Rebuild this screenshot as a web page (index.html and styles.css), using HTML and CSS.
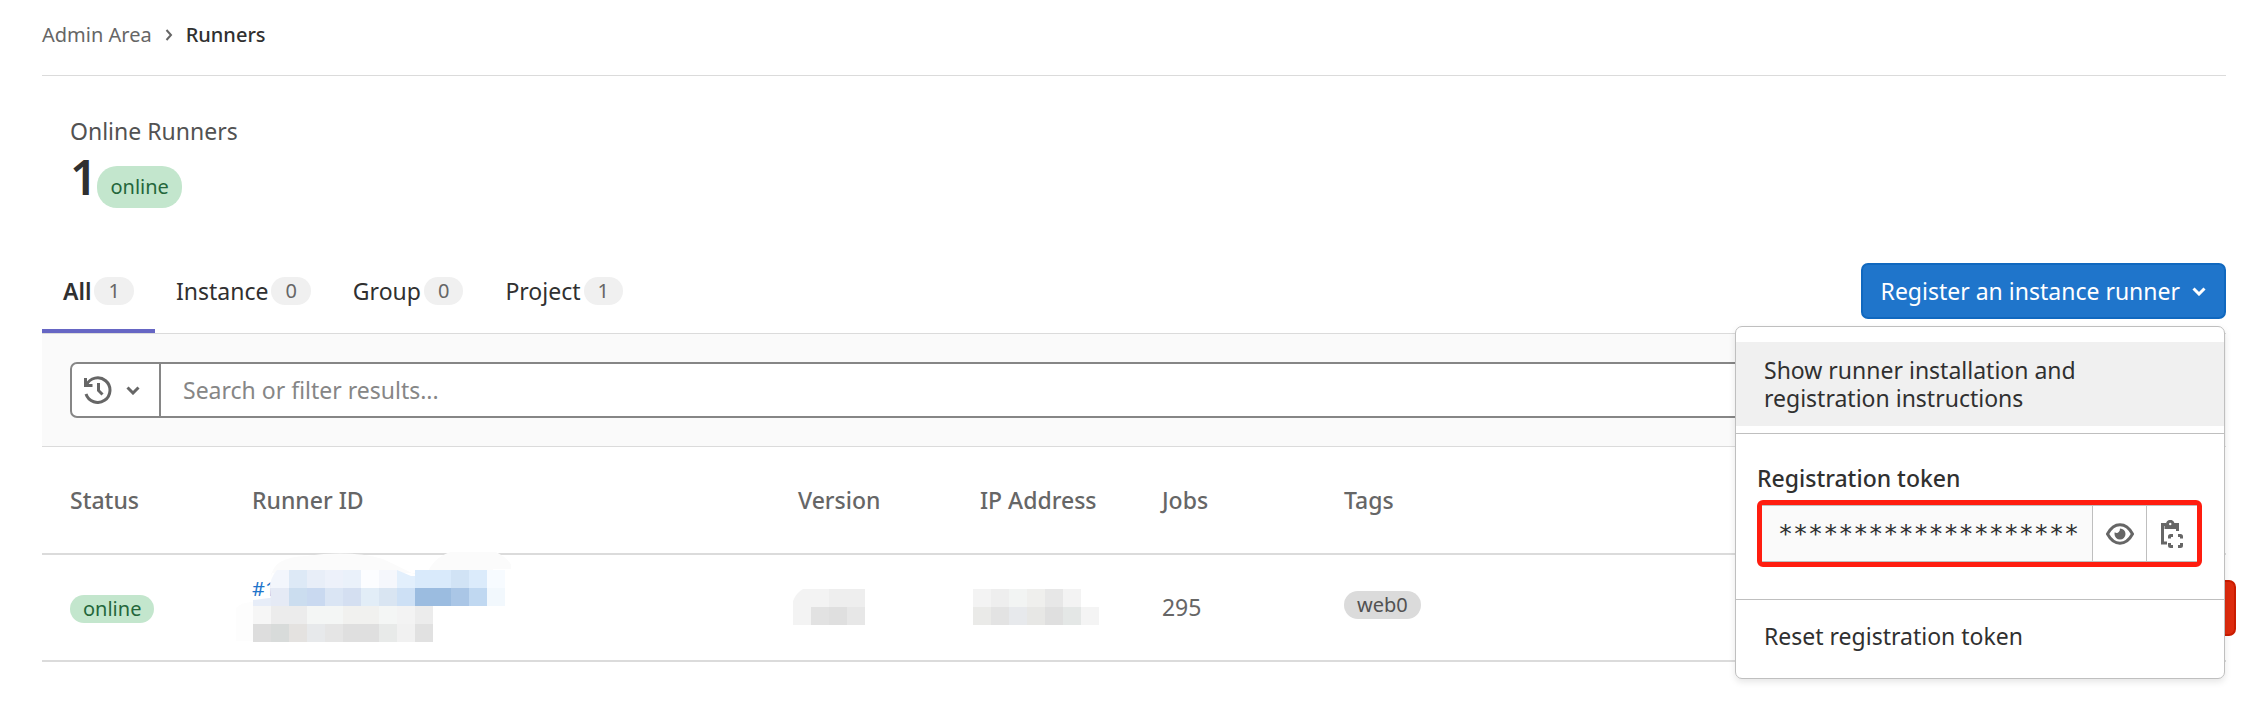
FILE: index.html
```html
<!DOCTYPE html>
<html lang="en">
<head>
<meta charset="utf-8">
<title>Runners · Admin Area</title>
<link rel="stylesheet" href="styles.css">
</head>
<body>
<main class="page">
  <nav class="breadcrumb" aria-label="Breadcrumb">
    <a href="#admin">Admin Area</a>
    <svg class="crumb-sep" viewBox="0 0 8 12" aria-hidden="true"><path d="M1.500 1l4.500 5-4.500 5"/></svg>
    <a class="current" href="#runners" aria-current="page">Runners</a>
  </nav>

  <section class="stat">
    <h2 class="stat-title">Online Runners</h2>
    <div class="stat-row"><span class="stat-value">1</span><span class="badge success large">online</span></div>
  </section>

  <div class="toolbar">
    <div class="tabs" role="tablist">
      <button class="tab active" role="tab" aria-selected="true">All<span class="count">1</span></button>
      <button class="tab" role="tab">Instance<span class="count">0</span></button>
      <button class="tab" role="tab">Group<span class="count">0</span></button>
      <button class="tab" role="tab">Project<span class="count">1</span></button>
    </div>
    <div class="dropdown">
      <button class="register" aria-expanded="true">Register an instance runner
        <svg class="chevron" viewBox="0 0 14 9" aria-hidden="true"><path d="M1.500 1.500L7 7l5.500-5.500"/></svg>
      </button>
      <div class="menu">
        <button class="item hovered">Show runner installation and registration instructions</button>
        <div class="token">
          <label for="token">Registration token</label>
          <div class="token-box">
            <input id="token" type="text" readonly value="********************">
            <button class="icon-btn" aria-label="Reveal token">
              <svg class="eye" viewBox="0 0 28 22" aria-hidden="true"><path class="line" d="M1.500 11C5 4.500 9 1.800 14 1.800S23 4.500 26.500 11C23 17.500 19 20.200 14 20.200S5 17.500 1.500 11z"/><path class="fill" d="M14 5.500a5.500 5.500 0 1 1-5.500 5.500c0-.6.1-1.200.3-1.700 2 1.500 5.300.2 5.200-3.800z"/></svg>
            </button>
            <button class="icon-btn last" aria-label="Copy token">
              <svg class="copy" viewBox="0 0 22 28" aria-hidden="true"><path d="M6 23H1.500V4.500H5M13 4.500h3.500V11M5 3.500V7.500H13.500V3.500"/><circle cx="9.250" cy="4" r="2.700"/><path d="M8.500 18.500v-2q0-1 1-1H12M17 15.500h2.500q1 0 1 1v2M20.500 23v2.500q0 1-1 1H17M12 26.500H9.500q-1 0-1-1V23"/></svg>
            </button>
          </div>
        </div>
        <button class="item">Reset registration token</button>
      </div>
    </div>
  </div>

  <form class="filter">
    <button type="button" class="history" aria-label="Search history">
      <svg class="clock" viewBox="0 0 28 28" aria-hidden="true"><path d="M1.500 2v7.500H8.500M2.500 9A12.300 12.300 0 1 1 2 18M14.500 7v7.500l4 4"/></svg>
      <svg class="chevron" viewBox="0 0 14 9" aria-hidden="true"><path d="M1.500 1.500L7 7l5.500-5.500"/></svg>
    </button>
    <input class="search" type="text" aria-label="Search" placeholder="Search or filter results...">
  </form>

  <table class="runners">
    <colgroup><col class="one"><col class="three"><col class="one"><col class="one"><col class="one"><col class="three"><col></colgroup>
    <thead>
      <tr><th>Status</th><th>Runner ID</th><th>Version</th><th>IP Address</th><th>Jobs</th><th>Tags</th><th></th></tr>
    </thead>
    <tbody>
      <tr>
        <td><span class="badge success">online</span></td>
        <td class="runner"><a href="#runner">#1</a>
          <svg class="mosaic id-mosaic" viewBox="0 0 280 92" aria-hidden="true">
            <path fill="#fbfbfb" d="M40 25Q42 5 75 4Q120 -2 152 7L183 22L196 22Q202 6 219 0L265 0Q279 7 282 17H262V21H40z"/>
            <path fill="#fdfdfd" d="M5 56Q10 50 22 50V89H5z"/>
            <path fill="#fff" d="M39 24H50V42H40z"/>
            <path fill="#e7edf8" d="M22 48l16-2h4V54H22z"/>
            <path fill="#f3f6fc" d="M46 18H58V36H39Q39 26 46 18z"/><path fill="#dde9f6" d="M58 18h18v18H58z"/><path fill="#e8eef8" d="M76 18h18v18H76z"/><path fill="#edf1fa" d="M94 18h18v18H94z"/><path fill="#eaf1fa" d="M112 18h18v18h-18z"/><path fill="#fcfdff" d="M130 18h18v18h-18z"/><path fill="#f5f7fc" d="M148 18h18v18h-18z"/><path fill="#e2effc" d="M166 18l14 6h4v12h-18z"/><path fill="#d9eafb" d="M184 18h36v18h-36z"/><path fill="#d1e3f5" d="M220 18h18v18h-18z"/><path fill="#dbebfb" d="M238 18h18v18h-18z"/><path fill="#f7fbff" d="M256 18h18v18h-18z"/>
            <path fill="#e5eaf5" d="M39 36h19v18H40z"/><path fill="#cbddef" d="M58 36h18v18H58z"/><path fill="#c9d9f0" d="M76 36h18v18H76z"/><path fill="#dae5f4" d="M94 36h18v18H94z"/><path fill="#d4dff1" d="M112 36h18v18h-18z"/><path fill="#e2edf7" d="M130 36h18v18h-18z"/><path fill="#d9e5f2" d="M148 36h18v18h-18z"/><path fill="#cde0f5" d="M166 36h18v18h-18z"/><path fill="#9bbce0" d="M184 36h36v18h-36z"/><path fill="#aac6e6" d="M220 36h18v18h-18z"/><path fill="#c0d8f1" d="M238 36h18v18h-18z"/><path fill="#f2f8fd" d="M256 36h18v18h-18z"/>
            <path fill="#f6f6f6" d="M22 54h18v18H22z"/><path fill="#ececec" d="M40 54h36v18H40z"/><path fill="#f4f6f5" d="M76 54h36v18H76z"/><path fill="#f1f1ef" d="M112 54h36v18h-36z"/><path fill="#f4f6f5" d="M148 54h18v18h-18z"/><path fill="#f3f3f3" d="M166 54h18v18h-18z"/><path fill="#ececec" d="M184 54h18v18h-18z"/>
            <path fill="#dddddd" d="M22 72h18v18H22z"/><path fill="#d8dbda" d="M40 72h18v18H40z"/><path fill="#e4e2e0" d="M58 72h18v18H58z"/><path fill="#e7e9eb" d="M76 72h18v18H76z"/><path fill="#e5e5e5" d="M94 72h18v18H94z"/><path fill="#dfdfdf" d="M112 72h36v18h-36z"/><path fill="#e8eae9" d="M148 72h18v18h-18z"/><path fill="#f1f1f1" d="M166 72h18v18h-18z"/><path fill="#e1e1e1" d="M184 72h18v18h-18z"/>
          </svg>
        </td>
        <td><svg class="mosaic version-mosaic" viewBox="0 0 72 36" aria-hidden="true"><path fill="#f3f3f3" d="M10 0H36V36H0V12Q3 4 10 0z"/><path fill="#eeeeee" d="M36 0h36v18H36z"/><path fill="#e2e2e2" d="M18 18h18v18H18z"/><path fill="#dfdfdf" d="M36 18h18v18H36z"/><path fill="#e7e7e7" d="M54 18h18v18H54z"/></svg></td>
        <td><svg class="mosaic ip-mosaic" viewBox="0 0 126 36" aria-hidden="true"><path fill="#f3f3f3" d="M0 0h18v18H0z"/><path fill="#eeeeee" d="M18 0h18v18H18z"/><path fill="#f2f4f3" d="M36 0h18v18H36z"/><path fill="#efefed" d="M54 0h18v18H54z"/><path fill="#e7e7e7" d="M72 0h18v18H72z"/><path fill="#f3f3f3" d="M90 0h18v18H90z"/><path fill="#eaeae8" d="M0 18h18v18H0z"/><path fill="#e3e3e3" d="M18 18h18v18H18z"/><path fill="#e7e9ec" d="M36 18h18v18H36z"/><path fill="#e7e7e5" d="M54 18h18v18H54z"/><path fill="#dfdfdf" d="M72 18h18v18H72z"/><path fill="#e4e7e6" d="M90 18h18v18H90z"/><path fill="#f4f4f4" d="M108 18h18v18h-18z"/></svg></td>
        <td>295</td>
        <td class="tags"><span class="badge tag">web0</span></td>
        <td class="actions"><button class="delete" aria-label="Delete runner"></button></td>
      </tr>
    </tbody>
  </table>
</main>
</body>
</html>
```
FILE: styles.css
```css
* { box-sizing: border-box; }
body {
  margin: 0;
  background: #fff;
  color: #303030;
  font: 23px/32px "Noto Sans", "Open Sans", sans-serif;
}
button, input { font: inherit; color: inherit; margin: 0; }
button { cursor: pointer; }
svg { display: block; fill: none; stroke: currentColor; stroke-width: 3; }
a { text-decoration: none; }
.page { min-height: 100vh; padding: 0 40px 0 42px; }

.breadcrumb {
  display: flex;
  align-items: center;
  gap: 13px;
  height: 76px;
  padding-bottom: 6px;
  border-bottom: 1px solid #dbdbdb;
  font-size: 20px;
}
.breadcrumb a { color: #666; }
.breadcrumb .current { color: #303030; font-weight: 500; }
.crumb-sep { width: 8px; height: 12px; color: #666; stroke-width: 2; }

.stat { padding: 39px 28px 0; }
.stat-title { margin: 0; font-size: 23px; font-weight: 400; color: #525252; }
.stat-row { display: flex; align-items: flex-end; height: 61px; }
.stat-value { font-size: 48px; font-weight: 600; line-height: 62px; }

.badge {
  display: inline-block;
  padding: 0 13px;
  border-radius: 20px;
  font-size: 20px;
  line-height: 28px;
  vertical-align: middle;
}
.success { background: #c3e6cd; color: #24663b; }
.large { line-height: 42px; }
.tag { background: #dbdbdb; color: #525252; }

.toolbar {
  display: flex;
  justify-content: space-between;
  height: 126px;
  border-bottom: 1px solid #dbdbdb;
}
.tabs { display: flex; align-items: flex-end; }
.tab {
  display: flex;
  align-items: center;
  gap: 3px;
  height: 84px;
  padding: 0 21px;
  border: 0;
  background: none;
}
.tab.active { border-bottom: 4px solid #6666c4; border-top: 4px solid transparent; font-weight: 600; }
.count {
  padding: 0 14px;
  border-radius: 14px;
  background: #f0f0f0;
  color: #666;
  font-size: 20px;
  font-weight: 400;
  line-height: 28px;
}

.dropdown { position: relative; padding-top: 55px; }
.register {
  display: flex;
  align-items: center;
  gap: 12px;
  height: 56px;
  padding: 0 18px;
  border: 2px solid #1068bf;
  border-radius: 7px;
  background: #1f75cb;
  color: #fff;
}
.chevron { width: 14px; height: 9px; }
.menu {
  position: absolute;
  top: 100%;
  right: 1px;
  z-index: 2;
  width: 490px;
  margin-top: -7px;
  padding: 15px 0 14px;
  border: 1px solid #bfbfbf;
  border-radius: 7px;
  background: #fff;
  box-shadow: 0 3px 7px rgba(0, 0, 0, 0.1);
}
.item {
  display: block;
  width: 100%;
  padding: 14px 84px 14px 28px;
  border: 0;
  background: none;
  line-height: 28px;
  text-align: left;
}
.item.hovered { background: #f0f0f0; }
.token {
  margin: 7px 0 8px;
  padding: 28px 22px 32px 21px;
  border-top: 1px solid #bfbfbf;
  border-bottom: 1px solid #bfbfbf;
}
.token label { display: block; margin-bottom: 6px; font-weight: 500; }
.token-box { display: flex; border: 5px solid #ff1d0f; border-radius: 6px; }
.token-box input {
  flex: 1;
  min-width: 0;
  height: 57px;
  padding: 0 0 0 16px;
  border: solid #bfbfbf;
  border-width: 1px 0;
  background: #fafafa;
  font-family: "DejaVu Sans Mono", monospace;
  font-size: 25px;
}
.icon-btn {
  display: grid;
  place-items: center;
  width: 54px;
  padding: 0;
  border: 1px solid #bfbfbf;
  border-right: 0;
  background: #fff;
  color: #666;
}
.icon-btn.last { width: 51px; }
.eye { width: 28px; height: 22px; }
.eye .fill { fill: currentColor; stroke: none; }
.copy { width: 22px; height: 28px; }

.filter {
  display: flex;
  padding: 28px;
  border-bottom: 1px solid #dbdbdb;
  background: #fafafa;
}
.history {
  display: flex;
  align-items: center;
  gap: 14px;
  width: 90px;
  padding: 0 12px;
  border: 2px solid #868686;
  border-right-width: 1px;
  border-radius: 7px 0 0 7px;
  background: #fff;
  color: #666;
}
.clock { width: 28px; height: 28px; }
.search {
  flex: 1;
  height: 56px;
  padding: 0 22px;
  border: 2px solid #868686;
  border-left-width: 1px;
  border-radius: 0 7px 7px 0;
  background: #fff;
}
.search::placeholder { color: #868686; opacity: 1; }

.runners { width: 100%; border-collapse: collapse; table-layout: fixed; }
.one { width: 8.3333%; }
.three { width: 25%; }
.runners th, .runners td {
  padding: 0 28px;
  border-bottom: 2px solid #dbdbdb;
  color: #666;
  text-align: left;
}
.runners th { height: 107px; font-weight: 500; white-space: nowrap; }
.runners td { height: 107px; padding-bottom: 2px; }
.runner { position: relative; }
.runner a { display: block; margin-bottom: 36px; color: #1f75cb; font-size: 20px; }
.mosaic { stroke: none; }
.id-mosaic { position: absolute; top: -3px; left: 7px; width: 280px; height: 92px; }
.version-mosaic { width: 72px; height: 36px; margin-left: -5px; }
.ip-mosaic { width: 126px; height: 36px; margin-left: -7px; }
.runners .tags { padding-bottom: 10px; }
.runners .actions { padding: 0; }
.delete {
  display: block;
  width: 56px;
  height: 56px;
  margin-left: auto;
  margin-right: -10px;
  border: 2px solid #c91c00;
  border-radius: 7px;
  background: #dd2b0e;
}
```
